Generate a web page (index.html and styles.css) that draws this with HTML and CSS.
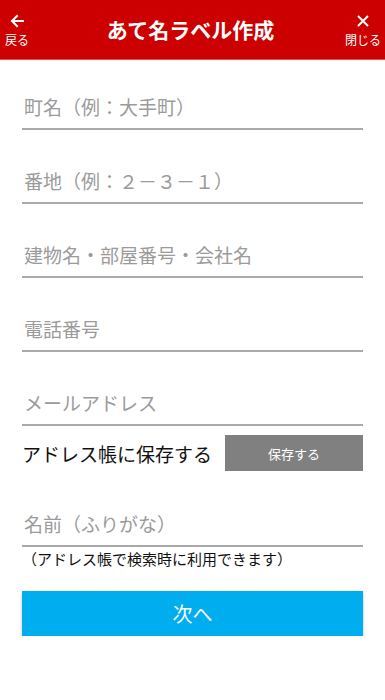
FILE: index.html
```html
<!DOCTYPE html>
<html lang="ja">
<head>
<meta charset="utf-8">
<link rel="stylesheet" href="styles.css">
</head>
<body>
<header class="bar">
  <div class="nav nav-left">
    <svg class="icon" viewBox="0 0 16 16" width="16" height="16"><path d="M14 8H3M8 3L3 8l5 5" fill="none" stroke="#fff" stroke-width="2" stroke-linecap="square"/></svg>
    <span class="nav-label">戻る</span>
  </div>
  <h1 class="title">あて名ラベル作成</h1>
  <div class="nav nav-right">
    <svg class="icon" viewBox="0 0 16 16" width="16" height="16"><path d="M3 3l10 10M13 3L3 13" fill="none" stroke="#fff" stroke-width="2"/></svg>
    <span class="nav-label">閉じる</span>
  </div>
</header>
<main class="form">
  <div class="field">町名（例：大手町）</div>
  <div class="field">番地（例：２－３－１）</div>
  <div class="field">建物名・部屋番号・会社名</div>
  <div class="field">電話番号</div>
  <div class="field">メールアドレス</div>
  <div class="save-row">
    <span class="save-label">アドレス帳に保存する</span>
    <button class="save-btn">保存する</button>
  </div>
  <div class="field field-name">名前（ふりがな）</div>
  <p class="note">（アドレス帳で検索時に利用できます）</p>
  <button class="next-btn">次へ</button>
</main>
</body>
</html>
```
FILE: styles.css
```css
* { box-sizing: border-box; }
body {
  margin: 0;
  background: #fff;
  font-family: "Noto Sans CJK JP", "Noto Sans", sans-serif;
}
.bar {
  height: 60px;
  background: #cc0000;
  border-bottom: 1px solid #e65050;
  display: grid;
  grid-template-columns: 1fr auto 1fr;
  align-items: center;
  padding: 0 4px 0 0;
}
.nav {
  display: flex;
  flex-direction: column;
  align-items: center;
  color: #fff;
  width: 36px;
}
.nav-left { width: 34px; justify-self: start; }
.nav-right { justify-self: end; }
.icon { display: block; margin-top: 2px; }
.nav-label {
  font-size: 12px;
  line-height: 16px;
  margin-top: 3px;
}
.title {
  margin: 0 0 2px;
  color: #fff;
  font-size: 21px;
  font-weight: bold;
  line-height: 30px;
  text-align: center;
}
.form {
  padding: 32px 22px 0;
  display: flex;
  flex-direction: column;
}
.field {
  font-size: 19px;
  line-height: 30px;
  color: #9b9b9b;
  padding: 0 0 6px 2px;
  border-bottom: 2px solid #a9a9a9;
  margin-bottom: 36px;
}
.save-row {
  margin-top: -27px;
  height: 36px;
  display: flex;
  align-items: center;
  justify-content: space-between;
}
.save-label {
  font-size: 19px;
  color: #111;
}
.save-btn {
  width: 138px;
  height: 36px;
  border: none;
  background: #808080;
  color: #fff;
  font-family: inherit;
  font-size: 13px;
}
.field-name {
  margin-top: 38px;
  margin-bottom: 0;
}
.note {
  margin: 2px 0 0;
  font-size: 15px;
  line-height: 20px;
  color: #111;
}
.next-btn {
  margin-top: 22px;
  height: 45px;
  border: none;
  background: #00aeef;
  color: #fff;
  font-family: inherit;
  font-size: 20px;
  box-shadow: 0 2px 3px rgba(0,0,0,0.25);
}
```
